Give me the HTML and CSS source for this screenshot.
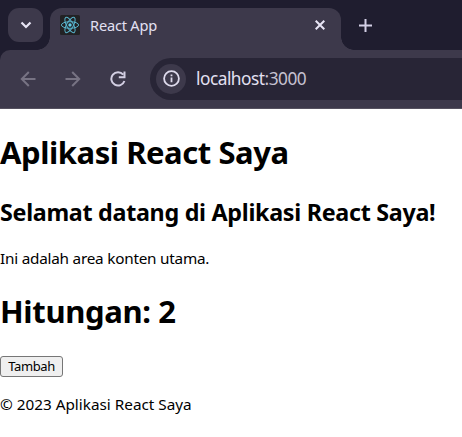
FILE: index.html
```html
<!DOCTYPE html>
<html lang="id">
<head>
<meta charset="utf-8">
<title>React App</title>
<link rel="stylesheet" href="styles.css">
</head>
<body>
<header class="browser">
  <div class="tabstrip">
    <button class="tab-search" aria-label="Tab">
      <svg width="12" height="8" viewBox="0 0 12 8"><path d="M1.500 1.500 6 6l4.500-4.500"/></svg>
    </button>
    <div class="tab">
      <svg class="favicon" width="20" height="20" viewBox="0 0 20 20">
        <rect width="20" height="20" rx="1.500"/>
        <g transform="translate(10 10)">
          <ellipse rx="8.600" ry="3.300"/>
          <ellipse rx="8.600" ry="3.300" transform="rotate(60)"/>
          <ellipse rx="8.600" ry="3.300" transform="rotate(120)"/>
          <circle r="1.700"/>
        </g>
      </svg>
      <span class="tab-title">React App</span>
      <svg class="close" width="10" height="10" viewBox="0 0 10 10"><path d="m.7.7 8.600 8.600m0-8.600L.7 9.300"/></svg>
    </div>
    <svg class="plus" width="13" height="13" viewBox="0 0 13 13"><path d="M6.500 0v13M0 6.500h13"/></svg>
  </div>
  <div class="toolbar">
    <svg class="nav dim" width="16" height="16" viewBox="0 0 16 16"><path d="M15.500 8H2m6.800-7L1.800 8l7 7"/></svg>
    <svg class="nav dim" width="16" height="16" viewBox="0 0 16 16"><path d="M.5 8H14M7.200 1l7 7-7 7"/></svg>
    <svg class="nav" width="16" height="16" viewBox="0 0 16 16"><path d="M13.200 3.600A6.700 6.700 0 1 0 14.400 10M14.500.5v5.700H8.800"/></svg>
    <div class="address">
      <span class="info"><svg width="17" height="17" viewBox="0 0 17 17"><circle cx="8.500" cy="8.500" r="7.400"/><path d="M8.500 7.600v4.700M8.500 4.500v1.800"/></svg></span>
      <span class="url">localhost<span class="port">:3000</span></span>
    </div>
  </div>
</header>
<main class="page">
  <h1 class="brand">Aplikasi React Saya</h1>
  <h2 class="welcome">Selamat datang di Aplikasi React Saya!</h2>
  <p class="intro">Ini adalah area konten utama.</p>
  <h1 class="count">Hitungan: 2</h1>
  <button class="add">Tambah</button>
  <p class="copyright">© 2023 Aplikasi React Saya</p>
</main>
</body>
</html>
```
FILE: styles.css
```css
* { box-sizing: border-box; }
body {
  margin: 0;
  background: #fff;
  color: #000;
  font-family: "Noto Sans", sans-serif;
  font-size: 15.3px;
  overflow: hidden;
}
svg { display: block; fill: none; flex: none; }
.browser { height: 109px; background: #1f1d2f; color: #e3e0f2; }
.tabstrip { display: flex; height: 50px; padding: 8px 0 0 8px; }
.tab-search {
  display: grid;
  place-items: center;
  width: 35px;
  height: 34px;
  padding: 0;
  border: 0;
  border-radius: 11px;
  background: #3d394b;
}
.tab-search svg { stroke: #e8e5f5; stroke-width: 2.2; }
.tab {
  position: relative;
  display: flex;
  align-items: center;
  width: 291px;
  height: 42px;
  margin-left: 7px;
  padding: 0 16px 8px 10px;
  border-radius: 12px 12px 0 0;
  background: #3d394b;
}
.tab::before, .tab::after {
  content: "";
  position: absolute;
  bottom: 0;
  width: 13px;
  height: 13px;
}
.tab::before { right: 100%; background: radial-gradient(circle at 0 0, transparent 12.5px, #3d394b 13px); }
.tab::after { left: 100%; background: radial-gradient(circle at 100% 0, transparent 12.5px, #3d394b 13px); }
.favicon rect { fill: #222224; }
.favicon ellipse { stroke: #58b4cc; stroke-width: 1; }
.favicon circle { fill: #61cbe6; }
.tab-title { margin-left: 10px; font-size: 14.6px; line-height: 20px; letter-spacing: -.2px; }
.close { margin-left: auto; stroke: #e8e5f5; stroke-width: 2; }
.plus { margin: 11px 0 0 18px; stroke: #d4d0e6; stroke-width: 2; }
.toolbar {
  display: flex;
  align-items: center;
  height: 59px;
  padding: 0 0 1px 20px;
  border-bottom: 1px solid #55515f;
  border-radius: 10px 0 0 0;
  background: #3d394b;
}
.nav { margin-right: 29px; stroke: #d3cfe3; stroke-width: 2; }
.dim { stroke: #777383; }
.nav:nth-child(3) { margin-right: 24px; }
.address {
  display: flex;
  align-items: center;
  flex: 1;
  height: 42px;
  padding-left: 6px;
  border-radius: 21px 0 0 21px;
  background: #282536;
}
.info { display: grid; place-items: center; width: 30px; height: 30px; border-radius: 50%; background: #3d394b; }
.info svg { stroke: #dedaec; stroke-width: 1.8; }
.url { margin-left: 10px; font-size: 17.3px; line-height: 24px; letter-spacing: -.5px; }
.port { color: #c5c1d1; }
.page { display: flow-root; padding-top: 1px; }
h1 { margin: 21.44px 0; font-size: 31px; line-height: 43px; }
h2 { margin: 19.92px 0; font-size: 23.3px; line-height: 32px; }
p { margin: 16px 0; line-height: 21px; }
h1, h2, p { white-space: nowrap; }
.brand { letter-spacing: -.45px; }
.welcome { letter-spacing: -.3px; }
.intro { letter-spacing: -.23px; }
.count { letter-spacing: -.35px; }
.add {
  display: block;
  width: 63px;
  height: 21px;
  margin-top: 22.5px;
  padding: 0;
  border: 1px solid #767676;
  border-radius: 3px;
  background: #efefef;
  color: #000;
  font: 13px/17px "Noto Sans", sans-serif;
  letter-spacing: -.4px;
}
.copyright { margin-top: 17.5px; }
```
